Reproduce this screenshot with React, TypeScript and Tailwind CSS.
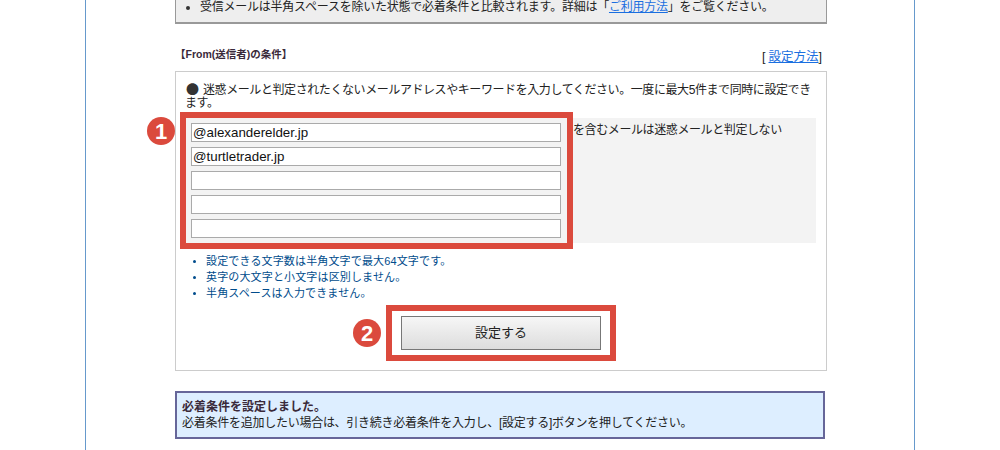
export default function App() {
  const inputs = ["@alexanderelder.jp", "@turtletrader.jp", "", "", ""];
  const notes = [
    "設定できる文字数は半角文字で最大64文字です。",
    "英字の大文字と小文字は区別しません。",
    "半角スペースは入力できません。",
  ];

  return (
    <div className="h-[450px] w-[1000px] overflow-hidden bg-white font-['Liberation_Sans','Noto_Sans_CJK_JP',sans-serif] text-[12px] text-[#222]">
      <div className="mx-[85px] h-full w-[830px] border-x border-[#6699cc] px-[89px]">
        {/* Top notice, cut off by the window */}
        <div className="flex h-[24px] w-[652px] items-start border-x border-b-2 border-[#999] bg-[#eeeeee] pl-[10px] pt-[1px] leading-[13px] tracking-[-0.24px]">
          <span className="mr-[10px] mt-[5px] size-[4px] rounded-full bg-[#333]" />
          <p>
            受信メールは半角スペースを除いた状態で必着条件と比較されます。詳細は「
            <a className="text-[#1a6fe0] underline">ご利用方法</a>
            」をご覧ください。
          </p>
        </div>

        {/* Heading row */}
        <div className="mt-[23px] flex h-[24px] w-[652px] justify-between">
          <h3 className="text-[10.5px] font-bold leading-[14px] text-[#3a2a3a]">
            【From(送信者)の条件】
          </h3>
          <span className="pr-[5px] pt-[2px] text-[12.5px] leading-[16px]">
            <span className="mr-[3px]">[</span>
            <a className="text-[#1a6fe0] underline">設定方法</a>]
          </span>
        </div>

        {/* Condition box */}
        <div className="relative h-[300px] w-[652px] border border-[#cccccc] px-[9px] pt-[10px]">
          <p className="h-[26px] w-[632px] leading-[13px] tracking-[-0.42px]">
            <span className="mr-[4px] ml-[1px] font-['Noto_Sans_CJK_JP'] text-[13px] leading-[13px] tracking-normal text-[#333]">●</span>
            迷惑メールと判定されたくないメールアドレスやキーワードを入力してください。一度に最大5件まで同時に設定できます。
          </p>

          <div className="ml-[1px] mt-[10px] flex h-[125px] w-[630px] gap-[12px] bg-[#f3f3f3] pl-[5px] pt-[5px]">
            <div className="flex w-[370px] flex-col gap-[5px]">
              {inputs.map((value, i) => (
                <input
                  key={i}
                  readOnly
                  value={value}
                  className="h-[19px] w-full border border-[#aaaaaa] bg-white px-[1px] text-[13.33px] text-[#111] outline-none"
                />
              ))}
            </div>
            <span className="leading-[14px] tracking-[-0.4px]">を含むメールは迷惑メールと判定しない</span>
          </div>

          <ul className="ml-[1px] mt-[12px] flex flex-col gap-[3px] pl-[7px] text-[11px] leading-[13px] tracking-[0.15px] text-[#004c8c]">
            {notes.map((note) => (
              <li key={note} className="flex items-center gap-[10px]">
                <span className="size-[3px] rounded-full bg-[#004c8c]" />
                {note}
              </li>
            ))}
          </ul>

          <div className="mt-[16px] flex justify-center">
            <button className="h-[34px] w-[200px] border border-[#777] bg-gradient-to-b from-[#f6f6f6] to-[#dddddd] text-[13px] text-[#222]">
              設定する
            </button>
          </div>

          {/* Annotations over the form */}
          <div className="absolute left-[4px] top-[40px] h-[137px] w-[393px] border-[6px] border-[#db4a3d]" />
          <div className="absolute left-[210px] top-[233px] h-[56px] w-[230px] border-[6px] border-[#db4a3d]" />
          <div className="absolute left-[-29px] top-[45px] flex size-[28px] items-center justify-center rounded-full bg-[#db4a3d] text-[22px] font-bold text-white">
            1
          </div>
          <div className="absolute left-[177px] top-[247px] flex size-[28px] items-center justify-center rounded-full bg-[#db4a3d] text-[22px] font-bold text-white">
            2
          </div>
        </div>

        {/* Result message */}
        <div className="mt-[20px] h-[48px] w-[650px] border-2 border-[#666699] bg-[#ddeeff] pl-[5px] pt-[6px] leading-[16px] tracking-[-0.26px]">
          <p className="font-bold tracking-normal text-[#3a2a3a]">必着条件を設定しました。</p>
          <p>必着条件を追加したい場合は、引き続き必着条件を入力し、[設定する]ボタンを押してください。</p>
        </div>
      </div>
    </div>
  );
}
